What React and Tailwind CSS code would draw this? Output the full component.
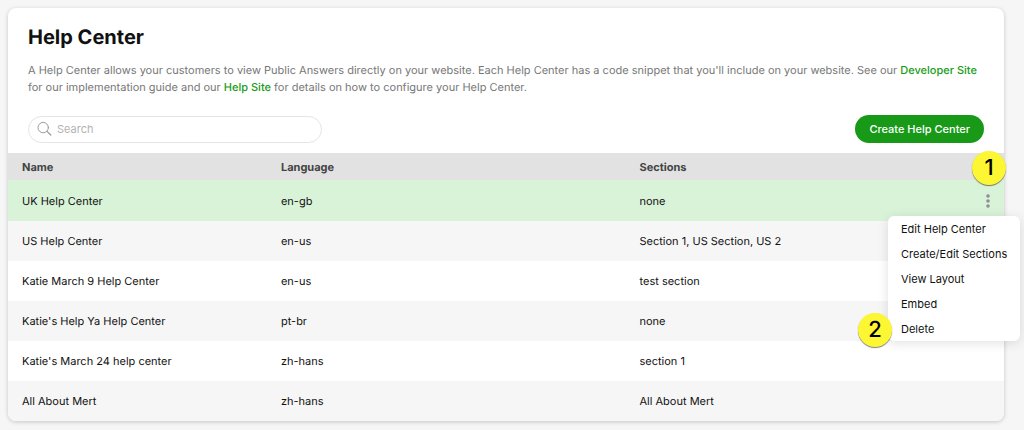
import React from 'react';

const helpCenters = [
  { id: 1, name: 'UK Help Center', language: 'en-gb', sections: 'none' },
  { id: 2, name: 'US Help Center', language: 'en-us', sections: 'Section 1, US Section, US 2' },
  { id: 3, name: 'Katie March 9 Help Center', language: 'en-us', sections: 'test section' },
  { id: 4, name: "Katie's Help Ya Help Center", language: 'pt-br', sections: 'none' },
  { id: 5, name: "Katie's March 24 help center", language: 'zh-hans', sections: 'section 1' },
  { id: 6, name: 'All About Mert', language: 'zh-hans', sections: 'All About Mert' },
];

const menuItems = ['Edit Help Center', 'Create/Edit Sections', 'View Layout', 'Embed', 'Delete'];

function StepBadge({ children, className }) {
  return (
    <span
      className={`absolute z-20 flex size-[34px] items-center justify-center rounded-full bg-[#fdf733] text-[22px] font-medium text-black shadow-[0_1px_1px_rgba(0,0,0,0.5)] ${className}`}
    >
      {children}
    </span>
  );
}

function SearchBox() {
  return (
    <label className="flex h-[27px] w-[294px] items-center gap-1 rounded-full border border-[#e4e4e4] px-2">
      <svg viewBox="0 0 16 16" className="size-4 shrink-0" fill="none" stroke="#9b9b9b" strokeLinecap="round">
        <circle cx="6.2" cy="6.6" r="5.2" />
        <path d="M10 10.4 13.8 14" strokeWidth="1.3" />
      </svg>
      <input
        type="search"
        aria-label="Search help centers"
        placeholder="Search"
        className="min-w-0 flex-1 bg-transparent outline-none placeholder:text-[#b3b3b3]"
      />
    </label>
  );
}

function RowMenu() {
  return (
    <ul
      role="menu"
      className="absolute right-[-16px] top-9 z-10 w-[132px] rounded-md bg-white text-left shadow-[0_2px_12px_rgba(0,0,0,0.12)]"
    >
      {menuItems.map((item) => (
        <li key={item} role="none" className="relative">
          <button
            type="button"
            role="menuitem"
            className="block h-[25px] w-full whitespace-nowrap pl-[13px] text-left hover:bg-gray-50"
          >
            {item}
          </button>
          {item === 'Delete' && <StepBadge className="left-[-30px] top-[-3px]">2</StepBadge>}
        </li>
      ))}
    </ul>
  );
}

function HelpCenterRow({ row, menuOpen, onToggle }) {
  return (
    <tr className={`group ${menuOpen ? 'h-[41px] bg-[#d9f3d9]' : 'h-10 bg-white even:bg-[#f6f6f6]'}`}>
      <td className="px-[14px] group-last:rounded-bl-lg">{row.name}</td>
      <td className="px-[14px]">{row.language}</td>
      <td className="px-[14px]">{row.sections}</td>
      <td className="relative pr-3 text-right group-last:rounded-br-lg">
        <button
          type="button"
          aria-label={`Actions for ${row.name}`}
          aria-expanded={menuOpen}
          onClick={onToggle}
          className={`inline-flex h-5 w-2 items-center justify-center align-middle ${menuOpen ? '' : 'opacity-0 focus:opacity-100 group-hover:opacity-100'}`}
        >
          <svg viewBox="0 0 4 14" className="h-[14px] w-1 shrink-0" fill="#8e8e93">
            <circle cx="2" cy="2" r="1.8" />
            <circle cx="2" cy="7" r="1.8" />
            <circle cx="2" cy="12" r="1.8" />
          </svg>
        </button>
        {menuOpen && <RowMenu />}
      </td>
    </tr>
  );
}

export default function App() {
  const [openId, setOpenId] = React.useState(1);

  return (
    <main className="min-h-screen bg-[#f6f6f6] py-2 pl-2 pr-5 font-[Inter,sans-serif] text-[11px] leading-4 text-[#111111] [text-rendering:geometricPrecision]">
      <div className="rounded-lg bg-white shadow-[0_1px_4px_rgba(0,0,0,0.2)]">
        <header className="px-5 pt-4">
          <h1 className="text-xl font-bold leading-[26px]">Help Center</h1>
          <p className="mt-3 leading-[17px] text-[#777777]">
            A Help Center allows your customers to view Public Answers directly on your website. Each Help Center
            has a code snippet that you'll include on your website. See our{' '}
            <a href="#developer" className="font-medium text-[#189d18] hover:underline">
              Developer Site
            </a>{' '}
            for our implementation guide and our{' '}
            <a href="#help" className="font-medium text-[#189d18] hover:underline">
              Help Site
            </a>{' '}
            for details on how to configure your Help Center.
          </p>
        </header>

        <div className="flex items-center justify-between px-5 pb-[10px] pt-[19px]">
          <SearchBox />
          <button
            type="button"
            className="h-7 rounded-full bg-[#189a18] px-[14px] font-medium text-white hover:bg-[#148514]"
          >
            Create Help Center
          </button>
        </div>

        <table className="w-full table-fixed border-collapse">
          <colgroup>
            <col className="w-[26%]" />
            <col className="w-[36%]" />
            <col />
            <col className="w-11" />
          </colgroup>
          <thead>
            <tr className="h-[27px] bg-[#e2e2e2] text-left text-[#444444]">
              <th className="px-[14px] font-bold">Name</th>
              <th className="px-[14px] font-bold">Language</th>
              <th className="px-[14px] font-bold">Sections</th>
              <th aria-label="Actions" className="relative">
                <StepBadge className="right-[-2px] top-[-2px]">1</StepBadge>
              </th>
            </tr>
          </thead>
          <tbody>
            {helpCenters.map((row) => (
              <HelpCenterRow
                key={row.id}
                row={row}
                menuOpen={openId === row.id}
                onToggle={() => setOpenId(openId === row.id ? null : row.id)}
              />
            ))}
          </tbody>
        </table>
      </div>
    </main>
  );
}
